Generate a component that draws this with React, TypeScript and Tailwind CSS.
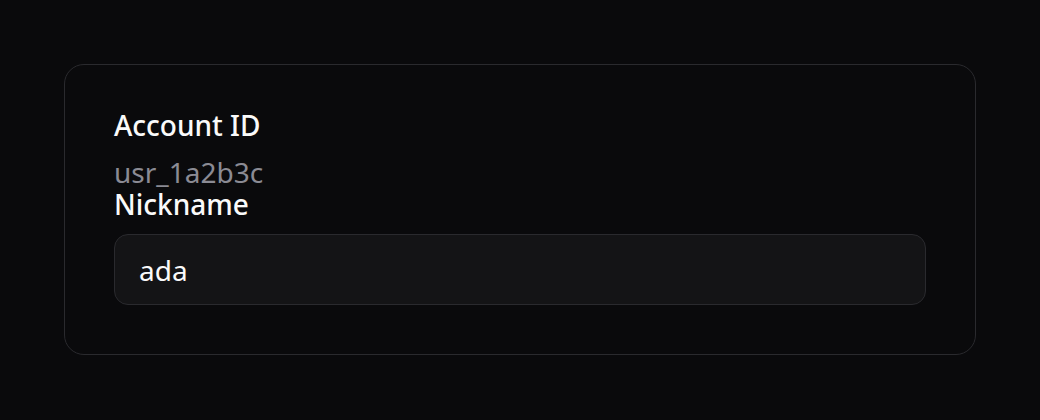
export default function App() {
  return (
    <div className="min-h-screen bg-[#0a0a0c] p-16 font-['Noto_Sans',sans-serif]">
      <div className="rounded-[20px] border border-[#2a2a2e] bg-[#0a0a0c] px-[49px] pt-[44px] pb-[49px]">
        <div className="flex flex-col">
          <div className="flex flex-col gap-[15px]">
            <span className="text-[28px] leading-[32px] font-medium text-[#fafafa]">Account ID</span>
            <span className="text-[28px] leading-[32px] text-[#8b8b94]">usr_1a2b3c</span>
          </div>
          <label className="text-[28px] leading-[32px] font-medium text-[#fafafa]">Nickname</label>
          <input
            defaultValue="ada"
            className="mt-[14px] h-[71px] w-full rounded-[14px] border border-[#2a2a2e] bg-[#141416] px-[24px] text-[28px] text-[#fafafa] outline-none"
          />
        </div>
      </div>
    </div>
  );
}
